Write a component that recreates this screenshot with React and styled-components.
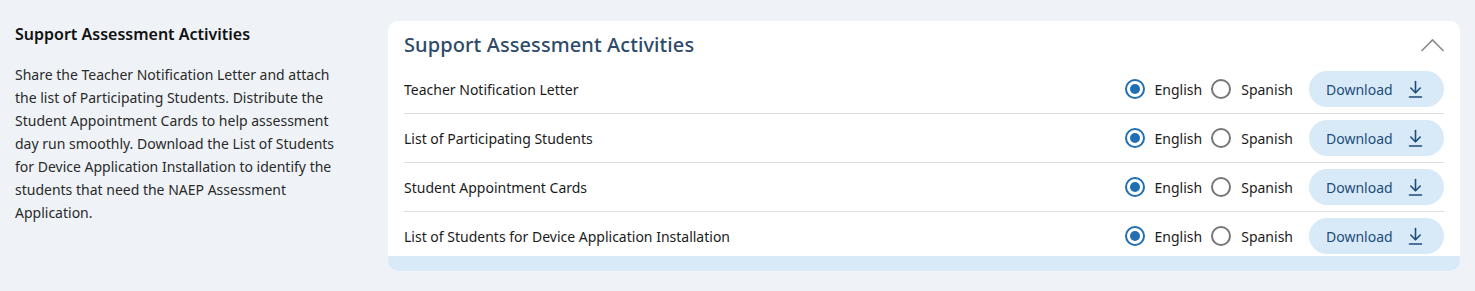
import React, { useState } from "react";
import styled, { createGlobalStyle } from "styled-components";

const Global = createGlobalStyle`
  html, body { margin: 0; padding: 0; background: #eff3f7; }
  body { font-family: "Noto Sans", "Open Sans", sans-serif; color: #1b1b1b; }
  * { box-sizing: border-box; }
`;

const Page = styled.div`
  display: flex;
  align-items: flex-start;
  gap: 38px;
  padding: 21px 15px 20px 15px;
`;

const Aside = styled.div`
  width: 335px;
  flex-shrink: 0;
`;

const AsideTitle = styled.h3`
  margin: 2px 0 0 0;
  font-size: 16px;
  line-height: 22px;
  font-weight: 600;
  color: #111;
`;

const AsideText = styled.p`
  margin: 18px 0 0 0;
  font-size: 14px;
  line-height: 23px;
  color: #2a2a2a;
`;

const Card = styled.section`
  flex: 1;
  background: #fff;
  border-radius: 10px;
  overflow: hidden;
`;

const CardHeader = styled.div`
  display: flex;
  align-items: center;
  justify-content: space-between;
  padding: 10px 16px 7px 16px;
  height: 44px;
`;

const CardTitle = styled.h2`
  margin: 0;
  font-size: 20px;
  font-weight: 500;
  color: #2e4a69;
  line-height: 27px;
  letter-spacing: 0.1px;
`;

const Collapse = styled.button`
  border: 0;
  background: none;
  padding: 0;
  display: flex;
  cursor: pointer;
`;

const List = styled.div`
  padding: 0 16px;
`;

const Row = styled.div`
  display: flex;
  align-items: center;
  padding: 6px 0;
  border-bottom: 1px solid #dedede;
  &:last-child {
    border-bottom: 0;
    padding-bottom: 2px;
  }
`;

const Label = styled.div`
  flex: 1;
  font-size: 14px;
  color: #1b1b1b;
`;

const RadioGroup = styled.div`
  display: flex;
  align-items: center;
  margin-right: 16px;
`;

const RadioLabel = styled.label`
  display: flex;
  align-items: center;
  gap: 10px;
  font-size: 14px;
  color: #1b1b1b;
  cursor: pointer;
  & + & {
    margin-left: 9px;
  }
`;

const RadioCircle = styled.span`
  width: 20px;
  height: 20px;
  border-radius: 50%;
  border: 2px solid ${(p) => (p.$checked ? "#1f6fb2" : "#767676")};
  display: flex;
  align-items: center;
  justify-content: center;
  &::after {
    content: "";
    width: 10px;
    height: 10px;
    border-radius: 50%;
    background: ${(p) => (p.$checked ? "#1f6fb2" : "transparent")};
  }
`;

const HiddenInput = styled.input`
  position: absolute;
  opacity: 0;
  width: 0;
  height: 0;
`;

const DownloadButton = styled.button`
  display: flex;
  align-items: center;
  justify-content: space-between;
  width: 135px;
  height: 36px;
  padding: 0 21px 0 17px;
  border: 0;
  border-radius: 18px;
  background: #d8eaf8;
  color: #1d4c78;
  font-family: inherit;
  font-size: 14px;
  cursor: pointer;
`;

const Footer = styled.div`
  height: 15px;
  background: #d8eaf8;
`;

const DownloadIcon = () => (
  <svg width="15" height="18" viewBox="0 0 15 18" fill="none" stroke="#1d4c78" strokeWidth="1.6" strokeLinecap="round" strokeLinejoin="round">
    <path d="M7.5 1.5v11" />
    <path d="M2.8 8l4.7 4.7L12.2 8" />
    <path d="M1.5 17h12" />
  </svg>
);

const Chevron = () => (
  <svg width="23" height="14" viewBox="0 0 23 14" fill="none" stroke="#8a8a8a" strokeWidth="1.6" strokeLinecap="round">
    <path d="M1 12.5L11.5 2L22 12.5" />
  </svg>
);

const items = [
  "Teacher Notification Letter",
  "List of Participating Students",
  "Student Appointment Cards",
  "List of Students for Device Application Installation",
];

function ItemRow({ name, idx }) {
  const [lang, setLang] = useState("en");
  return (
    <Row>
      <Label>{name}</Label>
      <RadioGroup>
        <RadioLabel>
          <HiddenInput type="radio" name={`lang-${idx}`} checked={lang === "en"} onChange={() => setLang("en")} />
          <RadioCircle $checked={lang === "en"} />
          English
        </RadioLabel>
        <RadioLabel>
          <HiddenInput type="radio" name={`lang-${idx}`} checked={lang === "es"} onChange={() => setLang("es")} />
          <RadioCircle $checked={lang === "es"} />
          Spanish
        </RadioLabel>
      </RadioGroup>
      <DownloadButton>
        Download
        <DownloadIcon />
      </DownloadButton>
    </Row>
  );
}

export default function App() {
  return (
    <>
      <Global />
      <Page>
        <Aside>
          <AsideTitle>Support Assessment Activities</AsideTitle>
          <AsideText>
            Share the Teacher Notification Letter and attach the list of Participating Students. Distribute the Student Appointment Cards to help assessment day run smoothly. Download the List of Students for Device Application Installation to identify the students that need the NAEP Assessment Application.
          </AsideText>
        </Aside>
        <Card>
          <CardHeader>
            <CardTitle>Support Assessment Activities</CardTitle>
            <Collapse aria-label="Collapse">
              <Chevron />
            </Collapse>
          </CardHeader>
          <List>
            {items.map((n, i) => (
              <ItemRow key={n} name={n} idx={i} />
            ))}
          </List>
          <Footer />
        </Card>
      </Page>
    </>
  );
}
